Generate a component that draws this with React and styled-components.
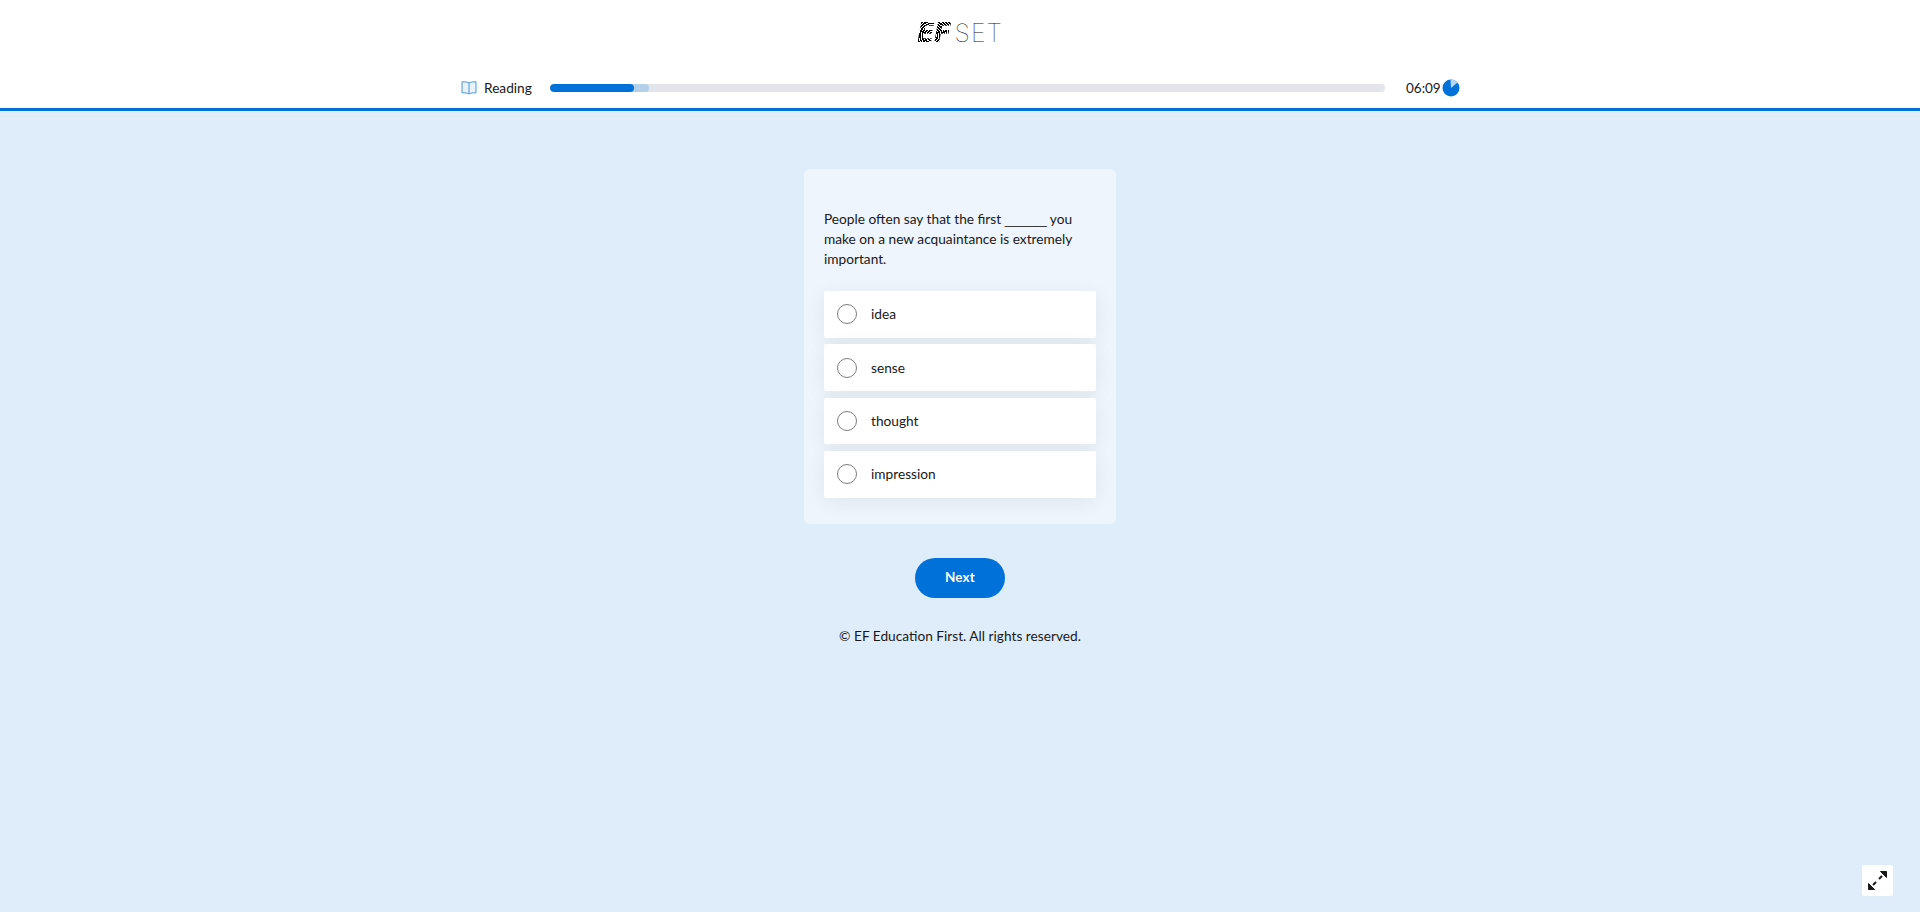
import React from "react";
import styled, { createGlobalStyle } from "styled-components";

const Global = createGlobalStyle`
  html, body { margin: 0; padding: 0; }
  body { background: #dfedfb; font-family: "Lato", "Noto Sans", sans-serif; color: #191919; }
`;
const Page = styled.div`
  min-height: 912px;
  position: relative;
  display: flex;
  flex-direction: column;
  background: #dfedfb;
`;
const Header = styled.header`
  height: 108px;
  background: #fff;
  border-bottom: 3px solid #0071d9;
  display: flex;
  flex-direction: column;
  align-items: center;
`;
const Logo = styled.div`
  height: 66px;
  display: flex;
  align-items: center;
  justify-content: center;
  gap: 4px;
`;
const LogoEF = styled.span`
  font: italic 700 26px/1 "DejaVu Sans", sans-serif;
  letter-spacing: -1px;
  background: repeating-radial-gradient(circle at 45% 60%, #000 0 1.5px, #fff 1.5px 2.3px);
  -webkit-background-clip: text;
  background-clip: text;
  color: transparent;
`;
const LogoSet = styled.span`
  font: 100 25px/1 "Inter", sans-serif;
  letter-spacing: 1px;
  color: #111;
`;
const ProgressRow = styled.div`
  width: 1004px;
  height: 42px;
  box-sizing: border-box;
  padding-top: 2px;
  display: flex;
  align-items: center;
  margin-left: 6px;
`;
const Section = styled.div`
  width: 89px;
  display: flex;
  align-items: center;
  gap: 7px;
  font-size: 13.7px;
`;
const SectionLabel = styled.span`
  margin-top: -2px;
`;
const Track = styled.div`
  width: 835px;
  height: 8px;
  border-radius: 4px;
  background: #e3e5ec;
  position: relative;
  overflow: hidden;
`;
const Fill = styled.div`
  position: absolute;
  left: 0;
  top: 0;
  bottom: 0;
  border-radius: 4px;
  background: ${(p) => p.$color};
`;
const Timer = styled.div`
  margin-left: 21px;
  display: flex;
  align-items: center;
  gap: 1px;
  font-size: 13.5px;
`;
const Main = styled.main`
  display: flex;
  flex-direction: column;
  align-items: center;
  padding-top: 58px;
`;
const Card = styled.section`
  width: 312px;
  box-sizing: border-box;
  height: 355px;
  padding: 40px 20px 26px;
  border-radius: 6px;
  background: #eef5fc;
`;
const Question = styled.p`
  margin: 0 0 22px;
  font-size: 13.7px;
  line-height: 20px;
`;
const Blank = styled.span`
  font-family: "Liberation Sans", sans-serif;
  font-size: 12.6px;
  line-height: 1;
`;
const Options = styled.div`
  display: flex;
  flex-direction: column;
  gap: 6.67px;
`;
const Option = styled.label`
  height: 46.67px;
  display: flex;
  align-items: center;
  gap: 14px;
  padding-left: 13px;
  background: #fff;
  border-radius: 2px;
  box-shadow: 0 4px 20px rgba(25, 25, 25, 0.07);
  font-size: 13.7px;
`;
const OptionText = styled.span`
  margin-top: -1px;
`;
const Radio = styled.span`
  width: 20px;
  height: 20px;
  box-sizing: border-box;
  border: 1px solid #7d7d7d;
  border-radius: 50%;
  background: #fff;
`;
const NextButton = styled.button`
  margin-top: 34px;
  width: 90px;
  height: 40px;
  padding: 0 0 2px;
  border: 0;
  border-radius: 20px;
  background: #0071d9;
  color: #fff;
  font: 700 13.5px "Lato", sans-serif;
  letter-spacing: 0.2px;
`;
const Footer = styled.footer`
  margin-top: 29px;
  font-size: 13.7px;
  line-height: 18px;
`;
const Fullscreen = styled.button`
  position: absolute;
  left: 1862px;
  top: 865px;
  width: 31px;
  height: 31px;
  padding: 0;
  border: 0;
  border-radius: 2px;
  background: #fff;
  display: flex;
  align-items: center;
  justify-content: center;
`;

const BookIcon = () => (
  <svg width="16" height="14" viewBox="0 0 16 14" fill="#eaf3fb" stroke="#4a96dc" strokeWidth="1">
    <path d="M8 2C6.500 1 4 .8 1 .8v11c3 0 5.500.2 7 1.200 1.500-1 4-1.200 7-1.200V.8c-3 0-5.500.2-7 1.200z" />
    <path d="M8 2v11" fill="none" />
  </svg>
);
const PieIcon = () => (
  <svg width="18" height="18" viewBox="0 0 18 18">
    <circle cx="9" cy="9" r="8.500" fill="#0071d9" />
    <path d="M9 9L8.500 .5A8.500 8.500 0 0 1 15.500 3.500z" fill="#b9d6f2" />
  </svg>
);
const ExpandIcon = () => (
  <svg width="21" height="21" viewBox="0 0 21 21" fill="#191919" stroke="#191919" strokeWidth="2">
    <path d="M15 6L12 9" fill="none" />
    <path d="M6 15L9 12" fill="none" />
    <path d="M13.500 1.500H19.500V7.500z" strokeWidth="1" />
    <path d="M1.500 13.500V19.500H7.500z" strokeWidth="1" />
  </svg>
);

const options = ["idea", "sense", "thought", "impression"];

export default function App() {
  return (
    <Page>
      <Global />
      <Header>
        <Logo>
          <LogoEF>EF</LogoEF>
          <LogoSet>SET</LogoSet>
        </Logo>
        <ProgressRow>
          <Section>
            <BookIcon />
            <SectionLabel>Reading</SectionLabel>
          </Section>
          <Track>
            <Fill style={{ width: "99px" }} $color="#b3cfe9" />
            <Fill style={{ width: "84px" }} $color="#0071d9" />
          </Track>
          <Timer>
            06:09
            <PieIcon />
          </Timer>
        </ProgressRow>
      </Header>
      <Main>
        <Card>
          <Question>
            People often say that the first <Blank>______</Blank> you make on a new acquaintance is extremely important.
          </Question>
          <Options>
            {options.map((o) => (
              <Option key={o}>
                <Radio />
                <OptionText>{o}</OptionText>
              </Option>
            ))}
          </Options>
        </Card>
        <NextButton>Next</NextButton>
        <Footer>© EF Education First. All rights reserved.</Footer>
      </Main>
      <Fullscreen aria-label="Fullscreen">
        <ExpandIcon />
      </Fullscreen>
    </Page>
  );
}
